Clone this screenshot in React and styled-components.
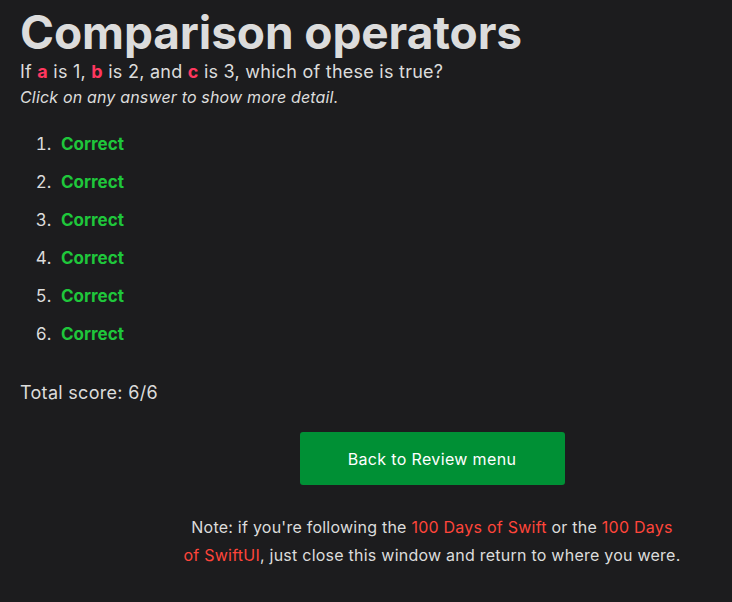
import React from "react";
import styled, { createGlobalStyle } from "styled-components";

const Global = createGlobalStyle`
  html, body { margin: 0; padding: 0; background: #1c1c1e; }
  body { font-family: Inter, "Noto Sans", sans-serif; color: #dcdcdc; }
`;

const Page = styled.main`
  padding: 0 20px 20px 20px;
  display: flex;
  flex-direction: column;
`;

const Title = styled.h1`
  margin: 6px 0 0 0;
  font-size: 46px;
  font-weight: 700;
  line-height: 52px;
  color: #dcdcdc;
  letter-spacing: -0.1px;
`;

const Question = styled.p`
  margin: 1px 0 0 0;
  font-size: 18px;
  line-height: 26px;
  letter-spacing: 0.25px;
`;

const Var = styled.strong`
  color: #ff375f;
  font-weight: 700;
`;

const Hint = styled.p`
  margin: 0;
  font-size: 16px;
  line-height: 24px;
  font-style: italic;
  letter-spacing: 0.17px;
`;

const List = styled.ol`
  margin: 16px 0 0 0;
  padding-left: 36px;
`;

const Item = styled.li`
  font-size: 17px;
  line-height: 38px;
  padding-left: 5px;
`;

const Result = styled.span`
  color: ${(p) => (p.$ok ? "#1fc73b" : "#ff453a")};
  font-weight: 700;
`;

const Score = styled.p`
  margin: 27px 0 0 0;
  font-size: 18px;
  line-height: 26px;
  letter-spacing: 0.3px;
`;

const Footer = styled.div`
  display: flex;
  flex-direction: column;
  align-items: center;
  padding-left: 112px;
  margin-right: -20px;
`;

const Button = styled.a`
  margin-top: 26px;
  width: 265px;
  height: 53px;
  display: flex;
  align-items: center;
  justify-content: center;
  background: #009035;
  color: #ffffff;
  font-size: 16px;
  letter-spacing: 0.35px;
  border-radius: 3px;
  text-decoration: none;
`;

const Note = styled.p`
  margin: 28px 0 0 0;
  width: 498px;
  text-align: center;
  font-size: 16px;
  line-height: 28px;
  letter-spacing: 0.24px;
`;

const Link = styled.a`
  color: #ff453a;
  text-decoration: none;
`;

export default function App() {
  const results = [true, true, true, true, true, true];
  return (
    <>
      <Global />
      <Page>
        <Title>Comparison operators</Title>
        <Question>
          If <Var>a</Var> is 1, <Var>b</Var> is 2, and <Var>c</Var> is 3, which of these is true?
        </Question>
        <Hint>Click on any answer to show more detail.</Hint>
        <List>
          {results.map((ok, i) => (
            <Item key={i}>
              <Result $ok={ok}>{ok ? "Correct" : "Wrong"}</Result>
            </Item>
          ))}
        </List>
        <Score>Total score: 6/6</Score>
        <Footer>
          <Button href="#">Back to Review menu</Button>
          <Note>
            Note: if you're following the <Link href="#">100 Days of Swift</Link> or the{" "}
            <Link href="#">100 Days of SwiftUI</Link>, just close this window and return to where you were.
          </Note>
        </Footer>
      </Page>
    </>
  );
}
